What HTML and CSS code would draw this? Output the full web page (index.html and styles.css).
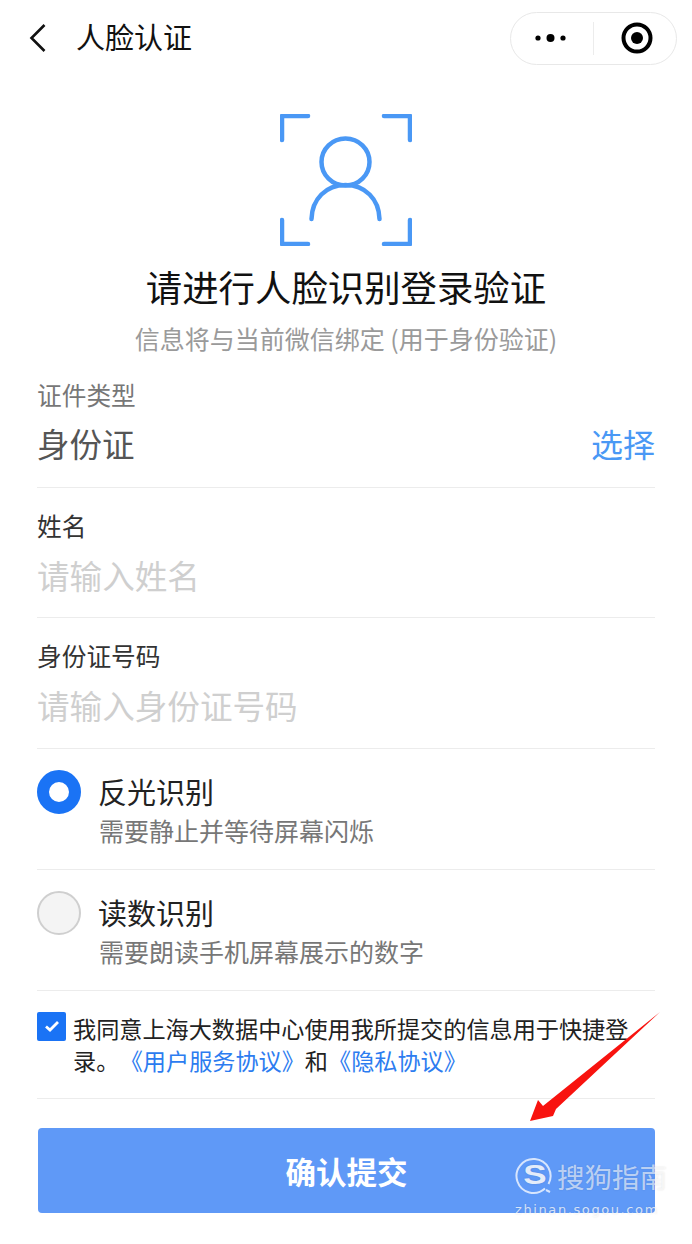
FILE: index.html
```html
<!DOCTYPE html>
<html lang="zh-CN">
<head>
<meta charset="utf-8">
<title>人脸认证</title>
<link rel="stylesheet" href="styles.css">
</head>
<body>
<div class="page">
  <header class="nav">
    <svg class="back" viewBox="0 0 20 32" width="20" height="32"><path d="M16.5 3 L3.5 16 L16.5 29" fill="none" stroke="#111" stroke-width="2.6"/></svg>
    <span class="nav-title">人脸认证</span>
    <div class="capsule">
      <svg class="dots" viewBox="0 0 34 10" width="34" height="10"><circle cx="4" cy="5" r="2.6" fill="#000"/><circle cx="16.500" cy="5" r="4" fill="#000"/><circle cx="29" cy="5" r="2.600" fill="#000"/></svg>
      <span class="cap-line"></span>
      <svg class="target" viewBox="0 0 32 32" width="32" height="32"><circle cx="16" cy="16" r="13.500" fill="none" stroke="#000" stroke-width="4"/><circle cx="16" cy="16" r="6" fill="#000"/></svg>
    </div>
  </header>

  <div class="hero">
    <svg class="face" viewBox="0 0 132 132" width="132" height="132" fill="none" stroke="#4a98f5" stroke-width="4.500" stroke-linecap="round" stroke-linejoin="round">
      <path d="M2 26 V2 H28"/><path d="M104 2 H130 V26"/><path d="M2 106 V130 H28"/><path d="M104 130 H130 V106"/>
      <ellipse cx="65.500" cy="48" rx="24" ry="23.500"/>
      <path d="M31.500 105 C32 85 46 71 65.500 71 C85 71 99 85 99.500 105"/>
    </svg>
    <h1 class="title">请进行人脸识别登录验证</h1>
    <p class="subtitle">信息将与当前微信绑定 (用于身份验证)</p>
  </div>

  <form class="form">
    <div class="field field-first">
      <div class="label label-grey">证件类型</div>
      <div class="value-row"><span class="value">身份证</span><span class="pick">选择</span></div>
    </div>
    <div class="field">
      <div class="label">姓名</div>
      <div class="placeholder">请输入姓名</div>
    </div>
    <div class="field">
      <div class="label">身份证号码</div>
      <div class="placeholder">请输入身份证号码</div>
    </div>
    <div class="option">
      <span class="radio radio-on"></span>
      <div class="opt-text">
        <div class="opt-title">反光识别</div>
        <div class="opt-desc">需要静止并等待屏幕闪烁</div>
      </div>
    </div>
    <div class="option">
      <span class="radio"></span>
      <div class="opt-text">
        <div class="opt-title">读数识别</div>
        <div class="opt-desc">需要朗读手机屏幕展示的数字</div>
      </div>
    </div>
    <div class="agree">
      <span class="check"><svg viewBox="0 0 16 14" width="16" height="14"><path d="M2 7.500 L6 11 L14 3" fill="none" stroke="#fff" stroke-width="2.800"/></svg></span>
      <p class="agree-text">我同意上海大数据中心使用我所提交的信息用于快捷登录。<span class="link link-first">《用户服务协议》</span>和<span class="link">《隐私协议》</span></p>
    </div>
  </form>
  <button class="submit" type="button">确认提交</button>

  <svg class="arrow" viewBox="0 0 692 1244" width="692" height="1244"><polygon points="660,1012 556,1109 553,1116 530,1121 538,1100 543,1106" fill="#f8130f"/></svg>
  <div class="mark">
    <div class="mark-row">
      <svg class="mark-logo" viewBox="0 0 38 38" width="38" height="38"><path d="M30 31.500 A17 17 0 1 1 33.500 27" fill="none" stroke="#fff" stroke-width="2"/><path d="M31 33 L35 35" stroke="#fff" stroke-width="2"/></svg>
      <span class="mark-s">S</span>
      <span class="mark-name">搜狗指南</span>
    </div>
    <div class="mark-url">zhinan.sogou.com</div>
  </div>
</div>
</body>
</html>
```
FILE: styles.css
```css
* { box-sizing: border-box; }
html, body { margin: 0; padding: 0; background: #fff; }
body { font-family: "Noto Sans CJK SC", "Noto Sans", sans-serif; }
.page { position: relative; width: 692px; height: 1244px; overflow: hidden; }

.nav { display: flex; align-items: center; height: 76px; padding: 0 15px 0 28px; }
.back { flex: none; }
.nav-title { margin: -5px 0 0 28px; font-size: 29px; line-height: 40px; color: #111; }
.capsule { margin-left: auto; width: 167px; height: 53px; border: 1px solid #e8e8e8; border-radius: 27px; display: flex; align-items: center; padding-left: 23px; }
.cap-line { width: 1px; height: 33px; background: #ececec; margin-left: 25px; }
.target { margin-left: 27px; }

.hero { display: flex; flex-direction: column; align-items: center; padding-top: 38px; }
.face { display: block; }
.title { margin: 15px 0 0; font-size: 36.400px; line-height: 50px; font-weight: 400; color: #111; }
.subtitle { margin: 11px 0 0; font-size: 25px; line-height: 32px; color: #9a9a9a; }

.form { margin: 0 37px; }
.field { height: 130.500px; border-bottom: 1px solid #ececec; padding-top: 20px; }
.field-first { height: 133.500px; padding-top: 23px; }
.label { font-size: 24.700px; line-height: 34px; color: #333; }
.label-grey { color: #777; }
.value-row { display: flex; justify-content: space-between; margin-top: 10px; }
.value { font-size: 32.500px; line-height: 44px; color: #555; }
.pick { font-size: 32px; line-height: 44px; color: #4a98f5; }
.placeholder { margin-top: 10px; font-size: 32.600px; line-height: 46px; color: #cfcfcf; }

.option { display: flex; height: 121px; border-bottom: 1px solid #ececec; padding-top: 21px; }
.radio { flex: none; width: 44px; height: 44px; border-radius: 50%; background: #f4f4f4; border: 2px solid #cfcfcf; }
.radio-on { background: #fff; border: 12px solid #1a73f5; }
.opt-text { margin-left: 17px; }
.opt-title { font-size: 29px; line-height: 42px; color: #222; }
.opt-desc { padding-left: 1px; font-size: 25px; line-height: 36px; color: #777; }

.agree { display: flex; height: 108.500px; border-bottom: 1px solid #ececec; padding-top: 21px; }
.check { flex: none; width: 29px; height: 29px; border-radius: 2px; background: #1a73f5; display: flex; align-items: center; justify-content: center; }
.agree-text { margin: 0 0 0 7px; font-size: 23.150px; line-height: 32px; color: #222; }
.link { color: #2c7cf0; }
.link-first { margin-left: 12px; }

.submit { display: block; margin: 29px 37px 0 38px; width: 617px; height: 85px; border: 0; border-radius: 4px; background: #5f99f7; color: #fff; font-family: inherit; font-size: 30.500px; font-weight: 700; }

.arrow { position: absolute; left: 0; top: 0; pointer-events: none; }
.mark { position: absolute; left: 515px; top: 1156px; color: rgba(255,255,255,.62); text-shadow: 0 0 2px rgba(0,0,0,.12); }
.mark-row { position: relative; display: flex; align-items: center; height: 40px; }
.mark-logo { flex: none; opacity: .75; }
.mark-s { position: absolute; left: 7px; top: 0; width: 26px; text-align: center; font-size: 28px; line-height: 38px; font-weight: 700; color: rgba(255,255,255,.85); font-family: "Liberation Sans", sans-serif; transform: scaleX(1.25); }
.mark-name { margin-left: 4px; font-size: 27.500px; line-height: 40px; }
.mark-url { margin-top: 7px; font-family: "DejaVu Sans", sans-serif; font-size: 13px; line-height: 14px; letter-spacing: 1.600px; color: rgba(255,255,255,.75); }
```
